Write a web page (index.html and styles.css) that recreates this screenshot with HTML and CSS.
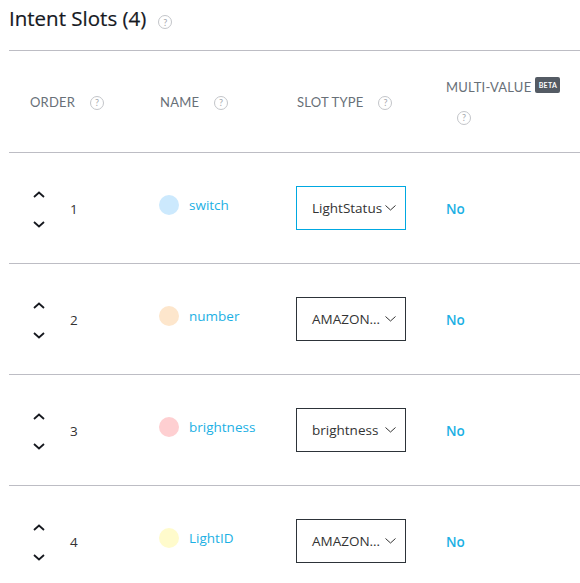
FILE: index.html
```html
<!DOCTYPE html>
<html>
<head>
<meta charset="utf-8">
<link rel="stylesheet" href="styles.css">
</head>
<body>
<div class="page">
  <div class="title-bar">
    <h1 class="title">Intent Slots (4)</h1>
    <span class="help title-help">?</span>
  </div>
  <div class="table">
    <div class="row head">
      <div class="cell"><span class="label">ORDER</span><span class="help">?</span></div>
      <div class="cell"><span class="label">NAME</span><span class="help">?</span></div>
      <div class="cell"><span class="label">SLOT TYPE</span><span class="help">?</span></div>
      <div class="cell stack">
        <div class="mv"><span class="label">MULTI-VALUE</span><span class="beta">BETA</span></div>
        <span class="help mv-help">?</span>
      </div>
    </div>

    <div class="row">
      <div class="cell order">
        <div class="arrows">
          <svg class="arrow" viewBox="0 0 12 7"><polyline points="1,6 6,1.5 11,6"/></svg>
          <svg class="arrow" viewBox="0 0 12 7"><polyline points="1,1 6,5.5 11,1"/></svg>
        </div>
        <span class="num">1</span>
      </div>
      <div class="cell name"><span class="dot blue"></span><span class="slot-name">switch</span></div>
      <div class="cell"><div class="select focus"><span class="sel-text">LightStatus</span><svg class="caret" viewBox="0 0 11 6"><polyline points="0.5,0.5 5.5,5 10.5,0.5"/></svg></div></div>
      <div class="cell"><span class="no">No</span></div>
    </div>

    <div class="row">
      <div class="cell order">
        <div class="arrows">
          <svg class="arrow" viewBox="0 0 12 7"><polyline points="1,6 6,1.5 11,6"/></svg>
          <svg class="arrow" viewBox="0 0 12 7"><polyline points="1,1 6,5.5 11,1"/></svg>
        </div>
        <span class="num">2</span>
      </div>
      <div class="cell name"><span class="dot orange"></span><span class="slot-name">number</span></div>
      <div class="cell"><div class="select"><span class="sel-text">AMAZON…</span><svg class="caret" viewBox="0 0 11 6"><polyline points="0.5,0.5 5.5,5 10.5,0.5"/></svg></div></div>
      <div class="cell"><span class="no">No</span></div>
    </div>

    <div class="row">
      <div class="cell order">
        <div class="arrows">
          <svg class="arrow" viewBox="0 0 12 7"><polyline points="1,6 6,1.5 11,6"/></svg>
          <svg class="arrow" viewBox="0 0 12 7"><polyline points="1,1 6,5.5 11,1"/></svg>
        </div>
        <span class="num">3</span>
      </div>
      <div class="cell name"><span class="dot red"></span><span class="slot-name">brightness</span></div>
      <div class="cell"><div class="select"><span class="sel-text">brightness</span><svg class="caret" viewBox="0 0 11 6"><polyline points="0.5,0.5 5.5,5 10.5,0.5"/></svg></div></div>
      <div class="cell"><span class="no">No</span></div>
    </div>

    <div class="row">
      <div class="cell order">
        <div class="arrows">
          <svg class="arrow" viewBox="0 0 12 7"><polyline points="1,6 6,1.5 11,6"/></svg>
          <svg class="arrow" viewBox="0 0 12 7"><polyline points="1,1 6,5.5 11,1"/></svg>
        </div>
        <span class="num">4</span>
      </div>
      <div class="cell name"><span class="dot yellow"></span><span class="slot-name">LightID</span></div>
      <div class="cell"><div class="select"><span class="sel-text">AMAZON…</span><svg class="caret" viewBox="0 0 11 6"><polyline points="0.5,0.5 5.5,5 10.5,0.5"/></svg></div></div>
      <div class="cell"><span class="no">No</span></div>
    </div>
  </div>
</div>
</body>
</html>
```

FILE: styles.css
```css
* { box-sizing: border-box; }
html, body { margin: 0; padding: 0; background: #fff; overflow: hidden; }
body { font-family: "Open Sans", "DejaVu Sans", sans-serif; color: #16191f; }

.page { padding-left: 9px; width: 600px; }

.title-bar {
  height: 50px;
  display: flex;
  align-items: flex-start;
  padding-top: 8px;
}
.title {
  margin: 0;
  font-size: 20.5px;
  line-height: 20px;
  font-weight: 400;
  color: #16191f;
  -webkit-text-stroke: 0.2px #16191f;
}
.title-help { margin-left: 12px; margin-top: 7px; }

.help {
  display: inline-flex;
  align-items: center;
  justify-content: center;
  width: 14px;
  height: 14px;
  border: 1px solid #c3c5c9;
  border-radius: 50%;
  font-family: "Lato", sans-serif;
  font-size: 9px;
  color: #a5a8ad;
  line-height: 1;
  flex: none;
}

.row {
  display: grid;
  grid-template-columns: 130px 137px 149px 1fr;
  padding-left: 21px;
  border-top: 1px solid #bdbdc4;
  height: 111px;
  align-items: center;
}
.row.head { height: 102px; }

.cell { display: flex; align-items: center; }

.head .label {
  font-family: "Lato", sans-serif;
  font-size: 13px;
  color: #687078;
  letter-spacing: 0.2px;
}
.head .cell .help { margin-left: 15px; margin-top: 2px; }

.head .stack {
  flex-direction: column;
  align-items: flex-start;
}
.mv { display: flex; align-items: center; height: 16px; }
.head .stack .mv-help { margin-left: 11px; margin-top: 16px; }
.beta {
  margin-left: 4px;
  background: #545b64;
  color: #fff;
  font-family: "Lato", sans-serif;
  font-size: 7px;
  font-weight: 700;
  letter-spacing: 0.3px;
  height: 16px;
  width: 25px;
  border-radius: 2px;
  display: inline-flex;
  align-items: center;
  justify-content: center;
  margin-top: -4px;
}

.order { padding-left: 3px; padding-top: 2px; }
.arrows {
  display: flex;
  flex-direction: column;
  gap: 23px;
  width: 12px;
}
.arrow {
  width: 12px;
  height: 7px;
  fill: none;
  stroke: #16191f;
  stroke-width: 1.8;
}
.num {
  margin-left: 25px;
  font-size: 13.5px;
  color: #333;
}

.name { padding-bottom: 6px; margin-left: -1px; }
.dot {
  width: 20px;
  height: 20px;
  border-radius: 50%;
  flex: none;
}
.dot.blue { background: #cce9fd; }
.dot.orange { background: #fde6cc; }
.dot.red { background: #fecfd1; }
.dot.yellow { background: #fffbcc; }
.slot-name {
  margin-left: 10px;
  font-size: 13.5px;
  color: #1cb0e4;
}

.select {
  width: 110px;
  height: 44px;
  border: 1px solid #2d3339;
  margin-left: -1px;
  display: flex;
  align-items: center;
  padding-left: 15px;
  padding-right: 9px;
  margin-top: -1px;
}
.select.focus { border-color: #00a8e1; }
.sel-text {
  font-size: 13.5px;
  color: #333;
  white-space: nowrap;
  flex: 1;
  min-width: 0;
}
.caret {
  width: 11px;
  height: 6px;
  fill: none;
  stroke: #333;
  stroke-width: 1;
  flex: none;
}

.no {
  font-size: 13.5px;
  font-weight: 600;
  color: #1cb0e4;
  padding-top: 2px;
}
```
